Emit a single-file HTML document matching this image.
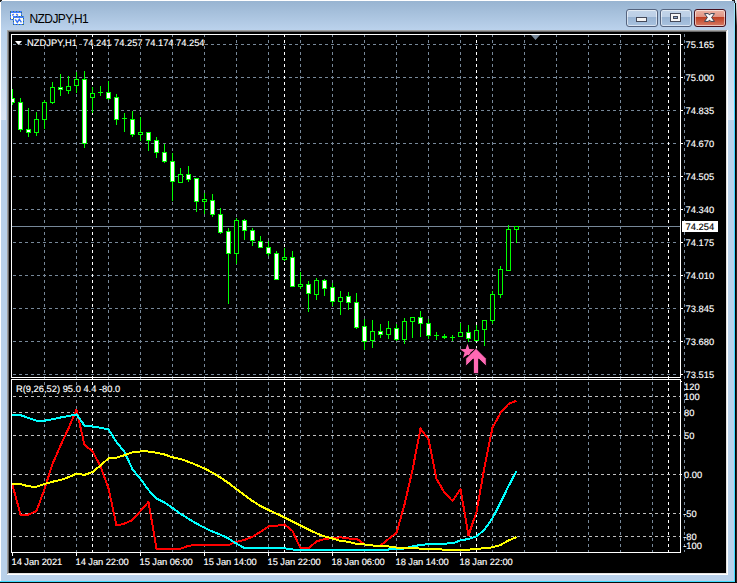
<!DOCTYPE html>
<html><head><meta charset="utf-8"><title>NZDJPY,H1</title>
<style>
html,body{margin:0;padding:0;background:#000;}
body{width:737px;height:583px;overflow:hidden;position:relative;font-family:"Liberation Sans",sans-serif;}
#win{position:absolute;left:0;top:0;width:737px;height:583px;background:#b9d1ea;overflow:hidden;}
#cap{position:absolute;left:1px;top:1px;width:733px;height:29px;background:linear-gradient(#98b4d1,#bbd2ec);}
#ttl{position:absolute;left:29.5px;top:11px;font-size:12px;line-height:16px;color:#000;letter-spacing:-0.58px;white-space:nowrap;}
.btn{position:absolute;top:9px;width:30px;height:16px;border:1px solid #55647f;border-radius:3px;box-shadow:inset 0 0 0 1px rgba(255,255,255,.55);}
.b1{background:linear-gradient(#c2d4e9 0,#bccfe6 43%,#98b3d2 44%,#a9c3e0 100%);}
.b3{background:linear-gradient(#ecb3a3 0,#df9484 43%,#bd3c1f 44%,#d77b66 100%);border-color:#46101e;}
svg{position:absolute;left:0;top:0;}
svg text{font-family:"Liberation Sans",sans-serif;font-size:9.33px;fill:#fff;stroke:#fff;stroke-width:0.15px;}
</style></head><body>
<div id="win">
<div id="cap"></div>
<div id="ttl">NZDJPY,H1</div>
<div class="btn b1" style="left:626px"></div>
<div class="btn b1" style="left:660px"></div>
<div class="btn b3" style="left:694px"></div>
<svg width="737" height="583" viewBox="0 0 737 583" shape-rendering="crispEdges">
<!-- outer frame -->
<rect x="0" y="0" width="737" height="1" fill="#fff"/>
<rect x="0" y="0" width="1" height="583" fill="#fff"/>
<defs><linearGradient id="cy" x1="0" y1="0" x2="0" y2="1"><stop offset="0" stop-color="#a8e9f9"/><stop offset="0.13" stop-color="#3fd4ff"/><stop offset="1" stop-color="#3fdcff"/></linearGradient><linearGradient id="dk" x1="0" y1="0" x2="0" y2="1"><stop offset="0" stop-color="#e6e6e6"/><stop offset="0.3" stop-color="#d0d0d0"/><stop offset="1" stop-color="#2a2020"/></linearGradient></defs><rect x="734" y="2" width="1" height="580" fill="url(#cy)"/>
<rect x="0" y="581" width="735" height="1" fill="#3fdcff"/>
<rect x="735" y="3" width="1" height="580" fill="#050303"/><rect x="736" y="3" width="1" height="580" fill="#2a2020"/>
<rect x="0" y="582" width="737" height="1" fill="#0a0a0a"/>
<rect x="736" y="0" width="1" height="26" fill="url(#dk)"/>
<rect x="732" y="0" width="3" height="1" fill="#222"/>
<rect x="734" y="1" width="1" height="2" fill="#222"/>
<rect x="0" y="0" width="2" height="1" fill="#222"/>
<rect x="0" y="1" width="1" height="1" fill="#222"/>
<defs><linearGradient id="hl" x1="0" y1="0" x2="0" y2="1"><stop offset="0" stop-color="#d9e5f3" stop-opacity="0"/><stop offset="1" stop-color="#d9e5f3" stop-opacity="1"/></linearGradient></defs>
<rect x="1" y="30" width="5" height="90" fill="url(#hl)"/>
<rect x="728" y="30" width="6" height="90" fill="url(#hl)"/>
<!-- app icon -->
<g>
<rect x="10.5" y="11.5" width="11" height="8" rx="1" fill="#fffef4" stroke="#417dff"/>
<rect x="11" y="11" width="10" height="2" fill="#417dff"/>
<rect x="10.5" y="11.5" width="11" height="8" rx="1" fill="none" stroke="#3c7868" stroke-dasharray="1 2" stroke-dashoffset="-1"/>
<g shape-rendering="auto" fill="none" stroke="#3a74f5" stroke-width="1.5"><path d="M12.3 15.3 L13.8 14.2"/><path d="M16.3 13.9 L17.8 15.6"/></g>
<rect x="13.5" y="16.5" width="10" height="8" rx="1" fill="#fffef4" stroke="#417dff"/>
<rect x="14" y="16" width="9" height="2" fill="#417dff"/>
<rect x="13.5" y="16.5" width="10" height="8" rx="1" fill="none" stroke="#3c7868" stroke-dasharray="1 2" stroke-dashoffset="-1"/>
<polyline points="15.3,19.3 17.3,22.4 19.3,19.3 21.4,22.4" fill="none" stroke="#3a74f5" stroke-width="1.4" shape-rendering="auto"/>
</g>
<!-- caption glyphs -->
<rect x="636" y="17" width="11" height="5" rx="1" fill="#454a5a"/><rect x="637" y="18" width="9" height="3" fill="#f4f4f4"/>
<rect x="670" y="13" width="11" height="9" rx="1" fill="#454a5a"/><rect x="671" y="14" width="9" height="7" fill="#f6f6f6"/><rect x="673" y="16" width="5" height="3" fill="#454a5a"/><rect x="674" y="17" width="3" height="1" fill="#8fa9cd"/>
<g shape-rendering="auto"><polygon points="704.5,13.6 708.4,13.6 709.5,15.1 710.6,13.6 714.5,13.6 711.6,17.5 714.5,21.4 710.6,21.4 709.5,19.9 708.4,21.4 704.5,21.4 707.4,17.5" fill="#fcfcfc" stroke="#3c4150" stroke-width="1" stroke-linejoin="round"/></g>
<!-- client edge -->
<rect x="7" y="30" width="721" height="545" fill="#fff"/>
<rect x="7" y="30" width="720" height="544" fill="#a0a0a0"/>
<rect x="8" y="31" width="719" height="543" fill="#e3e3e3"/>
<rect x="8" y="31" width="718" height="542" fill="#696969"/>
<rect x="9" y="32" width="717" height="541" fill="#000"/>
<!-- grid -->
<g>
<line x1="44.5" y1="34" x2="44.5" y2="552" stroke="#778899" stroke-dasharray="3 3"/>
<line x1="76.5" y1="34" x2="76.5" y2="552" stroke="#778899" stroke-dasharray="3 3"/>
<line x1="108.5" y1="34" x2="108.5" y2="552" stroke="#778899" stroke-dasharray="3 3"/>
<line x1="140.5" y1="34" x2="140.5" y2="552" stroke="#778899" stroke-dasharray="3 3"/>
<line x1="172.5" y1="34" x2="172.5" y2="552" stroke="#778899" stroke-dasharray="3 3"/>
<line x1="204.5" y1="34" x2="204.5" y2="552" stroke="#778899" stroke-dasharray="3 3"/>
<line x1="236.5" y1="34" x2="236.5" y2="552" stroke="#778899" stroke-dasharray="3 3"/>
<line x1="268.5" y1="34" x2="268.5" y2="552" stroke="#778899" stroke-dasharray="3 3"/>
<line x1="300.5" y1="34" x2="300.5" y2="552" stroke="#778899" stroke-dasharray="3 3"/>
<line x1="332.5" y1="34" x2="332.5" y2="552" stroke="#778899" stroke-dasharray="3 3"/>
<line x1="364.5" y1="34" x2="364.5" y2="552" stroke="#778899" stroke-dasharray="3 3"/>
<line x1="396.5" y1="34" x2="396.5" y2="552" stroke="#778899" stroke-dasharray="3 3"/>
<line x1="428.5" y1="34" x2="428.5" y2="552" stroke="#778899" stroke-dasharray="3 3"/>
<line x1="460.5" y1="34" x2="460.5" y2="552" stroke="#778899" stroke-dasharray="3 3"/>
<line x1="492.5" y1="34" x2="492.5" y2="552" stroke="#778899" stroke-dasharray="3 3"/>
<line x1="524.5" y1="34" x2="524.5" y2="552" stroke="#778899" stroke-dasharray="3 3"/>
<line x1="556.5" y1="34" x2="556.5" y2="552" stroke="#778899" stroke-dasharray="3 3"/>
<line x1="588.5" y1="34" x2="588.5" y2="552" stroke="#778899" stroke-dasharray="3 3"/>
<line x1="620.5" y1="34" x2="620.5" y2="552" stroke="#778899" stroke-dasharray="3 3"/>
<line x1="652.5" y1="34" x2="652.5" y2="552" stroke="#778899" stroke-dasharray="3 3"/>
<line x1="684.5" y1="34" x2="684.5" y2="552" stroke="#778899" stroke-dasharray="3 3"/>
<line x1="13" y1="44.5" x2="679" y2="44.5" stroke="#778899" stroke-dasharray="3 3"/>
<rect x="681" y="44" width="2" height="1" fill="#fff"/>
<line x1="13" y1="77.5" x2="679" y2="77.5" stroke="#778899" stroke-dasharray="3 3"/>
<rect x="681" y="77" width="2" height="1" fill="#fff"/>
<line x1="13" y1="110.5" x2="679" y2="110.5" stroke="#778899" stroke-dasharray="3 3"/>
<rect x="681" y="110" width="2" height="1" fill="#fff"/>
<line x1="13" y1="143.5" x2="679" y2="143.5" stroke="#778899" stroke-dasharray="3 3"/>
<rect x="681" y="143" width="2" height="1" fill="#fff"/>
<line x1="13" y1="176.5" x2="679" y2="176.5" stroke="#778899" stroke-dasharray="3 3"/>
<rect x="681" y="176" width="2" height="1" fill="#fff"/>
<line x1="13" y1="209.5" x2="679" y2="209.5" stroke="#778899" stroke-dasharray="3 3"/>
<rect x="681" y="209" width="2" height="1" fill="#fff"/>
<line x1="13" y1="242.5" x2="679" y2="242.5" stroke="#778899" stroke-dasharray="3 3"/>
<rect x="681" y="242" width="2" height="1" fill="#fff"/>
<line x1="13" y1="275.5" x2="679" y2="275.5" stroke="#778899" stroke-dasharray="3 3"/>
<rect x="681" y="275" width="2" height="1" fill="#fff"/>
<line x1="13" y1="308.5" x2="679" y2="308.5" stroke="#778899" stroke-dasharray="3 3"/>
<rect x="681" y="308" width="2" height="1" fill="#fff"/>
<line x1="13" y1="341.5" x2="679" y2="341.5" stroke="#778899" stroke-dasharray="3 3"/>
<rect x="681" y="341" width="2" height="1" fill="#fff"/>
<line x1="13" y1="374.5" x2="679" y2="374.5" stroke="#778899" stroke-dasharray="3 3"/>
<rect x="681" y="374" width="2" height="1" fill="#fff"/>
<line x1="92.5" y1="34" x2="92.5" y2="552" stroke="#fff" stroke-dasharray="3 3"/>
<line x1="284.5" y1="34" x2="284.5" y2="552" stroke="#fff" stroke-dasharray="3 3"/>
<line x1="476.5" y1="34" x2="476.5" y2="552" stroke="#fff" stroke-dasharray="3 3"/>
<line x1="668.5" y1="34" x2="668.5" y2="552" stroke="#fff" stroke-dasharray="3 3"/>
<line x1="13" y1="396.5" x2="680" y2="396.5" stroke="#c0c0c0" stroke-dasharray="3 3"/>
<line x1="13" y1="412.5" x2="680" y2="412.5" stroke="#c0c0c0" stroke-dasharray="3 3"/>
<line x1="13" y1="435.5" x2="680" y2="435.5" stroke="#c0c0c0" stroke-dasharray="3 3"/>
<line x1="13" y1="474.5" x2="680" y2="474.5" stroke="#c0c0c0" stroke-dasharray="3 3"/>
<line x1="13" y1="513.5" x2="680" y2="513.5" stroke="#c0c0c0" stroke-dasharray="3 3"/>
<line x1="13" y1="536.5" x2="680" y2="536.5" stroke="#c0c0c0" stroke-dasharray="3 3"/>
<rect x="681" y="474" width="1" height="1" fill="#fff"/>
<rect x="681" y="381" width="1" height="1" fill="#fff"/>
</g>
<rect x="12" y="226" width="668" height="1" fill="#778899"/>
<polygon points="531,35 540,35 535.5,40" fill="#778899" shape-rendering="auto"/>
<!-- borders -->
<rect x="11" y="34" width="670" height="1" fill="#fff"/>
<rect x="11" y="377" width="670" height="1" fill="#fff"/>
<rect x="11" y="379" width="670" height="1" fill="#fff"/>
<rect x="11" y="552" width="670" height="1" fill="#fff"/>
<rect x="11" y="34" width="1" height="344" fill="#fff"/>
<rect x="680" y="34" width="1" height="344" fill="#fff"/>
<rect x="11" y="379" width="1" height="174" fill="#fff"/>
<rect x="680" y="379" width="1" height="174" fill="#fff"/>
<!-- candles -->
<defs><clipPath id="cm"><rect x="12" y="35" width="668" height="342"/></clipPath><clipPath id="cs"><rect x="12" y="380" width="668" height="172"/></clipPath></defs>
<g clip-path="url(#cm)">
<rect x="12" y="89" width="1" height="16" fill="#00ff00"/>
<rect x="10" y="98" width="5" height="5" fill="#00ff00"/>
<rect x="11" y="99" width="3" height="3" fill="#fff"/>
<rect x="20" y="98" width="1" height="34" fill="#00ff00"/>
<rect x="18" y="102" width="5" height="28" fill="#00ff00"/>
<rect x="19" y="103" width="3" height="26" fill="#fff"/>
<rect x="28" y="108" width="1" height="29" fill="#00ff00"/>
<rect x="26" y="129" width="5" height="4" fill="#00ff00"/>
<rect x="27" y="130" width="3" height="2" fill="#fff"/>
<rect x="36" y="112" width="1" height="24" fill="#00ff00"/>
<rect x="34" y="119" width="5" height="14" fill="#00ff00"/>
<rect x="35" y="120" width="3" height="12" fill="#000"/>
<rect x="44" y="100" width="1" height="29" fill="#00ff00"/>
<rect x="42" y="102" width="5" height="18" fill="#00ff00"/>
<rect x="43" y="103" width="3" height="16" fill="#000"/>
<rect x="52" y="82" width="1" height="22" fill="#00ff00"/>
<rect x="50" y="87" width="5" height="16" fill="#00ff00"/>
<rect x="51" y="88" width="3" height="14" fill="#000"/>
<rect x="60" y="74" width="1" height="22" fill="#00ff00"/>
<rect x="58" y="87" width="5" height="3" fill="#00ff00"/>
<rect x="59" y="88" width="3" height="1" fill="#fff"/>
<rect x="68" y="76" width="1" height="18" fill="#00ff00"/>
<rect x="66" y="86" width="5" height="5" fill="#00ff00"/>
<rect x="67" y="87" width="3" height="3" fill="#000"/>
<rect x="76" y="72" width="1" height="21" fill="#00ff00"/>
<rect x="74" y="79" width="5" height="7" fill="#00ff00"/>
<rect x="75" y="80" width="3" height="5" fill="#000"/>
<rect x="84" y="71" width="1" height="77" fill="#00ff00"/>
<rect x="82" y="79" width="5" height="65" fill="#00ff00"/>
<rect x="83" y="80" width="3" height="63" fill="#fff"/>
<rect x="92" y="87" width="1" height="26" fill="#00ff00"/>
<rect x="90" y="93" width="5" height="5" fill="#00ff00"/>
<rect x="91" y="94" width="3" height="3" fill="#000"/>
<rect x="100" y="86" width="1" height="10" fill="#00ff00"/>
<rect x="98" y="92" width="5" height="1" fill="#00ff00"/>
<rect x="108" y="81" width="1" height="19" fill="#00ff00"/>
<rect x="106" y="92" width="5" height="7" fill="#00ff00"/>
<rect x="107" y="93" width="3" height="5" fill="#fff"/>
<rect x="116" y="94" width="1" height="31" fill="#00ff00"/>
<rect x="114" y="97" width="5" height="23" fill="#00ff00"/>
<rect x="115" y="98" width="3" height="21" fill="#fff"/>
<rect x="124" y="113" width="1" height="19" fill="#00ff00"/>
<rect x="122" y="118" width="5" height="1" fill="#00ff00"/>
<rect x="132" y="111" width="1" height="26" fill="#00ff00"/>
<rect x="130" y="119" width="5" height="16" fill="#00ff00"/>
<rect x="131" y="120" width="3" height="14" fill="#fff"/>
<rect x="140" y="117" width="1" height="24" fill="#00ff00"/>
<rect x="138" y="132" width="5" height="3" fill="#00ff00"/>
<rect x="139" y="133" width="3" height="1" fill="#000"/>
<rect x="148" y="132" width="1" height="19" fill="#00ff00"/>
<rect x="146" y="132" width="5" height="9" fill="#00ff00"/>
<rect x="147" y="133" width="3" height="7" fill="#fff"/>
<rect x="156" y="137" width="1" height="21" fill="#00ff00"/>
<rect x="154" y="140" width="5" height="13" fill="#00ff00"/>
<rect x="155" y="141" width="3" height="11" fill="#fff"/>
<rect x="164" y="144" width="1" height="19" fill="#00ff00"/>
<rect x="162" y="152" width="5" height="10" fill="#00ff00"/>
<rect x="163" y="153" width="3" height="8" fill="#fff"/>
<rect x="172" y="153" width="1" height="48" fill="#00ff00"/>
<rect x="170" y="161" width="5" height="21" fill="#00ff00"/>
<rect x="171" y="162" width="3" height="19" fill="#fff"/>
<rect x="180" y="168" width="1" height="15" fill="#00ff00"/>
<rect x="178" y="174" width="5" height="9" fill="#00ff00"/>
<rect x="179" y="175" width="3" height="7" fill="#000"/>
<rect x="188" y="166" width="1" height="16" fill="#00ff00"/>
<rect x="186" y="174" width="5" height="6" fill="#00ff00"/>
<rect x="187" y="175" width="3" height="4" fill="#fff"/>
<rect x="196" y="178" width="1" height="34" fill="#00ff00"/>
<rect x="194" y="178" width="5" height="24" fill="#00ff00"/>
<rect x="195" y="179" width="3" height="22" fill="#fff"/>
<rect x="204" y="193" width="1" height="21" fill="#00ff00"/>
<rect x="202" y="199" width="5" height="3" fill="#00ff00"/>
<rect x="203" y="200" width="3" height="1" fill="#000"/>
<rect x="212" y="194" width="1" height="23" fill="#00ff00"/>
<rect x="210" y="200" width="5" height="15" fill="#00ff00"/>
<rect x="211" y="201" width="3" height="13" fill="#fff"/>
<rect x="220" y="208" width="1" height="26" fill="#00ff00"/>
<rect x="218" y="214" width="5" height="19" fill="#00ff00"/>
<rect x="219" y="215" width="3" height="17" fill="#fff"/>
<rect x="228" y="228" width="1" height="76" fill="#00ff00"/>
<rect x="226" y="231" width="5" height="23" fill="#00ff00"/>
<rect x="227" y="232" width="3" height="21" fill="#fff"/>
<rect x="236" y="218" width="1" height="46" fill="#00ff00"/>
<rect x="234" y="220" width="5" height="34" fill="#00ff00"/>
<rect x="235" y="221" width="3" height="32" fill="#000"/>
<rect x="244" y="219" width="1" height="21" fill="#00ff00"/>
<rect x="242" y="220" width="5" height="11" fill="#00ff00"/>
<rect x="243" y="221" width="3" height="9" fill="#fff"/>
<rect x="252" y="228" width="1" height="18" fill="#00ff00"/>
<rect x="250" y="230" width="5" height="11" fill="#00ff00"/>
<rect x="251" y="231" width="3" height="9" fill="#fff"/>
<rect x="260" y="236" width="1" height="12" fill="#00ff00"/>
<rect x="258" y="241" width="5" height="7" fill="#00ff00"/>
<rect x="259" y="242" width="3" height="5" fill="#fff"/>
<rect x="268" y="241" width="1" height="15" fill="#00ff00"/>
<rect x="266" y="247" width="5" height="7" fill="#00ff00"/>
<rect x="267" y="248" width="3" height="5" fill="#fff"/>
<rect x="276" y="251" width="1" height="29" fill="#00ff00"/>
<rect x="274" y="253" width="5" height="27" fill="#00ff00"/>
<rect x="275" y="254" width="3" height="25" fill="#fff"/>
<rect x="284" y="248" width="1" height="13" fill="#00ff00"/>
<rect x="282" y="257" width="5" height="3" fill="#00ff00"/>
<rect x="283" y="258" width="3" height="1" fill="#000"/>
<rect x="292" y="251" width="1" height="36" fill="#00ff00"/>
<rect x="290" y="257" width="5" height="30" fill="#00ff00"/>
<rect x="291" y="258" width="3" height="28" fill="#fff"/>
<rect x="300" y="272" width="1" height="17" fill="#00ff00"/>
<rect x="298" y="284" width="5" height="3" fill="#00ff00"/>
<rect x="299" y="285" width="3" height="1" fill="#000"/>
<rect x="308" y="281" width="1" height="31" fill="#00ff00"/>
<rect x="306" y="284" width="5" height="10" fill="#00ff00"/>
<rect x="307" y="285" width="3" height="8" fill="#fff"/>
<rect x="316" y="278" width="1" height="22" fill="#00ff00"/>
<rect x="314" y="280" width="5" height="15" fill="#00ff00"/>
<rect x="315" y="281" width="3" height="13" fill="#000"/>
<rect x="324" y="279" width="1" height="17" fill="#00ff00"/>
<rect x="322" y="280" width="5" height="9" fill="#00ff00"/>
<rect x="323" y="281" width="3" height="7" fill="#fff"/>
<rect x="332" y="283" width="1" height="23" fill="#00ff00"/>
<rect x="330" y="287" width="5" height="15" fill="#00ff00"/>
<rect x="331" y="288" width="3" height="13" fill="#fff"/>
<rect x="340" y="291" width="1" height="24" fill="#00ff00"/>
<rect x="338" y="297" width="5" height="5" fill="#00ff00"/>
<rect x="339" y="298" width="3" height="3" fill="#000"/>
<rect x="348" y="292" width="1" height="18" fill="#00ff00"/>
<rect x="346" y="296" width="5" height="7" fill="#00ff00"/>
<rect x="347" y="297" width="3" height="5" fill="#fff"/>
<rect x="356" y="293" width="1" height="36" fill="#00ff00"/>
<rect x="354" y="302" width="5" height="26" fill="#00ff00"/>
<rect x="355" y="303" width="3" height="24" fill="#fff"/>
<rect x="364" y="319" width="1" height="31" fill="#00ff00"/>
<rect x="362" y="326" width="5" height="16" fill="#00ff00"/>
<rect x="363" y="327" width="3" height="14" fill="#fff"/>
<rect x="372" y="320" width="1" height="28" fill="#00ff00"/>
<rect x="370" y="331" width="5" height="10" fill="#00ff00"/>
<rect x="371" y="332" width="3" height="8" fill="#000"/>
<rect x="380" y="324" width="1" height="14" fill="#00ff00"/>
<rect x="378" y="331" width="5" height="4" fill="#00ff00"/>
<rect x="379" y="332" width="3" height="2" fill="#fff"/>
<rect x="388" y="321" width="1" height="18" fill="#00ff00"/>
<rect x="386" y="328" width="5" height="7" fill="#00ff00"/>
<rect x="387" y="329" width="3" height="5" fill="#000"/>
<rect x="396" y="324" width="1" height="17" fill="#00ff00"/>
<rect x="394" y="328" width="5" height="12" fill="#00ff00"/>
<rect x="395" y="329" width="3" height="10" fill="#fff"/>
<rect x="404" y="318" width="1" height="26" fill="#00ff00"/>
<rect x="402" y="321" width="5" height="19" fill="#00ff00"/>
<rect x="403" y="322" width="3" height="17" fill="#000"/>
<rect x="412" y="317" width="1" height="21" fill="#00ff00"/>
<rect x="410" y="317" width="5" height="5" fill="#00ff00"/>
<rect x="411" y="318" width="3" height="3" fill="#000"/>
<rect x="420" y="311" width="1" height="26" fill="#00ff00"/>
<rect x="418" y="317" width="5" height="7" fill="#00ff00"/>
<rect x="419" y="318" width="3" height="5" fill="#fff"/>
<rect x="428" y="319" width="1" height="20" fill="#00ff00"/>
<rect x="426" y="323" width="5" height="13" fill="#00ff00"/>
<rect x="427" y="324" width="3" height="11" fill="#fff"/>
<rect x="436" y="332" width="1" height="8" fill="#00ff00"/>
<rect x="434" y="335" width="5" height="1" fill="#00ff00"/>
<rect x="444" y="334" width="1" height="5" fill="#00ff00"/>
<rect x="442" y="336" width="5" height="2" fill="#00ff00"/>
<rect x="452" y="335" width="1" height="6" fill="#00ff00"/>
<rect x="450" y="337" width="5" height="1" fill="#00ff00"/>
<rect x="460" y="323" width="1" height="14" fill="#00ff00"/>
<rect x="458" y="332" width="5" height="5" fill="#00ff00"/>
<rect x="459" y="333" width="3" height="3" fill="#000"/>
<rect x="468" y="325" width="1" height="17" fill="#00ff00"/>
<rect x="466" y="332" width="5" height="7" fill="#00ff00"/>
<rect x="467" y="333" width="3" height="5" fill="#fff"/>
<rect x="476" y="325" width="1" height="16" fill="#00ff00"/>
<rect x="474" y="330" width="5" height="11" fill="#00ff00"/>
<rect x="475" y="331" width="3" height="9" fill="#000"/>
<rect x="484" y="320" width="1" height="26" fill="#00ff00"/>
<rect x="482" y="320" width="5" height="10" fill="#00ff00"/>
<rect x="483" y="321" width="3" height="8" fill="#000"/>
<rect x="492" y="291" width="1" height="33" fill="#00ff00"/>
<rect x="490" y="294" width="5" height="27" fill="#00ff00"/>
<rect x="491" y="295" width="3" height="25" fill="#000"/>
<rect x="500" y="266" width="1" height="32" fill="#00ff00"/>
<rect x="498" y="269" width="5" height="26" fill="#00ff00"/>
<rect x="499" y="270" width="3" height="24" fill="#000"/>
<rect x="508" y="225" width="1" height="46" fill="#00ff00"/>
<rect x="506" y="229" width="5" height="42" fill="#00ff00"/>
<rect x="507" y="230" width="3" height="40" fill="#000"/>
<rect x="516" y="226" width="1" height="17" fill="#00ff00"/>
<rect x="514" y="226" width="5" height="4" fill="#00ff00"/>
<rect x="515" y="227" width="3" height="2" fill="#000"/>
</g>
<!-- arrow + star -->
<g shape-rendering="auto">
<polygon points="467.5,343.7 469.3,349.1 475.0,349.2 470.4,352.6 472.1,358.0 467.5,354.7 462.9,358.0 464.6,352.6 460.0,349.2 465.7,349.1" fill="#ff69b4"/>
<polygon points="476,348.3 486.3,358.6 486.3,366.4 478.7,359.0 478.7,373.7 473.3,373.7 473.3,359.0 465.7,366.4 465.7,358.6" fill="#ff69b4" stroke="#000" stroke-width="1"/>
</g>
<!-- indicator -->
<g clip-path="url(#cs)" shape-rendering="crispEdges">
<polyline points="12,485.0 12.5,485.0 20.5,514.5 28.5,514.5 36.5,511.0 44.5,489.0 52.5,464.0 60.5,445.6 68.5,428.4 76.5,409.6 84.5,445.0 92.5,451.0 100.5,466.5 108.5,488.3 116.5,525.5 124.5,523.6 132.5,520.0 140.5,511.0 148.5,501.8 156.5,548.7 164.5,548.7 172.5,548.7 180.5,548.7 188.5,545.8 196.5,545.0 204.5,545.0 212.5,545.0 220.5,545.0 228.5,545.0 236.5,541.8 244.5,540.0 252.5,536.7 260.5,531.8 268.5,526.4 276.5,525.8 284.5,524.5 292.5,531.0 300.5,548.2 308.5,548.2 316.5,541.5 324.5,539.0 332.5,538.2 340.5,537.3 348.5,538.5 356.5,538.5 364.5,544.5 372.5,545.5 380.5,545.5 388.5,539.0 396.5,533.0 404.5,504.5 412.5,470.0 420.5,428.5 428.5,439.5 436.5,478.8 444.5,492.7 452.5,501.0 460.5,489.0 468.5,535.5 476.5,511.8 484.5,467.0 492.5,427.6 500.5,413.0 508.5,404.0 516.5,400.7" fill="none" stroke="#ff0000" stroke-width="2" stroke-linejoin="round"/>
<polyline points="12,415.1 12.5,415.1 20.5,415.1 28.5,418.0 36.5,420.7 44.5,420.7 52.5,419.3 60.5,417.5 68.5,416.0 76.5,414.4 84.5,425.6 92.5,426.5 100.5,427.8 108.5,429.3 116.5,442.0 124.5,452.0 132.5,469.3 140.5,479.0 148.5,490.0 156.5,498.4 164.5,502.4 172.5,508.0 180.5,513.8 188.5,518.8 196.5,523.6 204.5,527.7 212.5,531.6 220.5,534.7 228.5,538.5 236.5,543.6 244.5,548.2 252.5,548.2 260.5,548.2 268.5,548.2 276.5,548.2 284.5,548.2 292.5,549.5 300.5,549.5 308.5,549.5 316.5,549.5 324.5,549.5 332.5,549.5 340.5,549.5 348.5,549.5 356.5,549.5 364.5,549.5 372.5,549.5 380.5,549.5 388.5,549.5 396.5,549.3 404.5,548.5 412.5,546.4 420.5,545.0 428.5,544.2 436.5,544.0 444.5,543.6 452.5,543.3 460.5,540.4 468.5,539.0 476.5,536.4 484.5,529.6 492.5,518.2 500.5,502.7 508.5,486.2 516.5,471.0" fill="none" stroke="#00ffff" stroke-width="2" stroke-linejoin="round"/>
<polyline points="12,484.0 12.5,484.0 20.5,484.0 28.5,486.4 36.5,486.8 44.5,484.0 52.5,481.7 60.5,480.0 68.5,477.2 76.5,473.7 84.5,474.9 92.5,472.1 100.5,465.5 108.5,458.3 116.5,457.7 124.5,455.2 132.5,452.3 140.5,451.4 148.5,451.5 156.5,452.7 164.5,454.5 172.5,457.3 180.5,459.0 188.5,461.8 196.5,465.0 204.5,468.5 212.5,472.7 220.5,477.6 228.5,483.0 236.5,489.0 244.5,495.2 252.5,501.0 260.5,506.0 268.5,510.0 276.5,513.6 284.5,517.6 292.5,521.5 300.5,525.5 308.5,529.5 316.5,533.3 324.5,536.4 332.5,538.5 340.5,541.0 348.5,541.8 356.5,544.0 364.5,544.5 372.5,545.5 380.5,545.8 388.5,546.4 396.5,547.6 404.5,547.8 412.5,548.2 420.5,548.6 428.5,549.0 436.5,549.3 444.5,549.6 452.5,549.6 460.5,549.6 468.5,549.6 476.5,549.0 484.5,548.2 492.5,547.3 500.5,545.0 508.5,540.5 516.5,537.0" fill="none" stroke="#ffff00" stroke-width="2" stroke-linejoin="round"/>
</g>
<!-- price label -->
<rect x="682" y="221" width="36" height="11" fill="#fff"/>
<g shape-rendering="auto" text-rendering="geometricPrecision">
<polygon points="15,41 22,41 18.5,45" fill="#fff"/>
<g shape-rendering="crispEdges" fill="#000"><rect x="27" y="37" width="50" height="9"/><rect x="83" y="37" width="27" height="9"/><rect x="114" y="37" width="27" height="9"/><rect x="145" y="37" width="27" height="9"/><rect x="176" y="37" width="28" height="9"/><rect x="16" y="385" width="44" height="8"/><rect x="63" y="385" width="18" height="8"/><rect x="83" y="385" width="13" height="8"/><rect x="99" y="385" width="21" height="8"/></g>
<text x="27" y="46" style="letter-spacing:0.05px">NZDJPY,H1</text><text x="83" y="46">74.241</text><text x="114" y="46">74.257</text><text x="145" y="46">74.174</text><text x="176" y="46">74.254</text>
<text x="16" y="392">R(9,26,52) 95.0 4.4 -80.0</text>
<text x="685.6" y="48">75.165</text>
<text x="685.6" y="81">75.000</text>
<text x="685.6" y="114">74.835</text>
<text x="685.6" y="147">74.670</text>
<text x="685.6" y="180">74.505</text>
<text x="685.6" y="213">74.340</text>
<text x="685.6" y="246">74.175</text>
<text x="685.6" y="279">74.010</text>
<text x="685.6" y="312">73.845</text>
<text x="685.6" y="345">73.680</text>
<text x="685.6" y="378">73.515</text>
<text x="684" y="390">120</text>
<text x="684" y="399.6">100</text>
<text x="684" y="415.7">80</text>
<text x="684" y="439">50</text>
<text x="684" y="478">0.00</text>
<text x="683.2" y="517">-50</text>
<text x="683.2" y="540">-80</text>
<text x="683.2" y="549">-100</text>
<text x="11.5" y="565" style="letter-spacing:-0.06px">14 Jan 2021</text>
<rect x="12" y="553" width="1" height="3" fill="#fff"/>
<text x="75.5" y="565" style="letter-spacing:-0.06px">14 Jan 22:00</text>
<rect x="76" y="553" width="1" height="3" fill="#fff"/>
<text x="139.5" y="565" style="letter-spacing:-0.06px">15 Jan 06:00</text>
<rect x="140" y="553" width="1" height="3" fill="#fff"/>
<text x="203.5" y="565" style="letter-spacing:-0.06px">15 Jan 14:00</text>
<rect x="204" y="553" width="1" height="3" fill="#fff"/>
<text x="267.5" y="565" style="letter-spacing:-0.06px">15 Jan 22:00</text>
<rect x="268" y="553" width="1" height="3" fill="#fff"/>
<text x="331.5" y="565" style="letter-spacing:-0.06px">18 Jan 06:00</text>
<rect x="332" y="553" width="1" height="3" fill="#fff"/>
<text x="395.5" y="565" style="letter-spacing:-0.06px">18 Jan 14:00</text>
<rect x="396" y="553" width="1" height="3" fill="#fff"/>
<text x="459.5" y="565" style="letter-spacing:-0.06px">18 Jan 22:00</text>
<rect x="460" y="553" width="1" height="3" fill="#fff"/>
<text x="685.6" y="230" style="fill:#000;stroke:#000">74.254</text>
</g>
</svg>
</div>
</body></html>
